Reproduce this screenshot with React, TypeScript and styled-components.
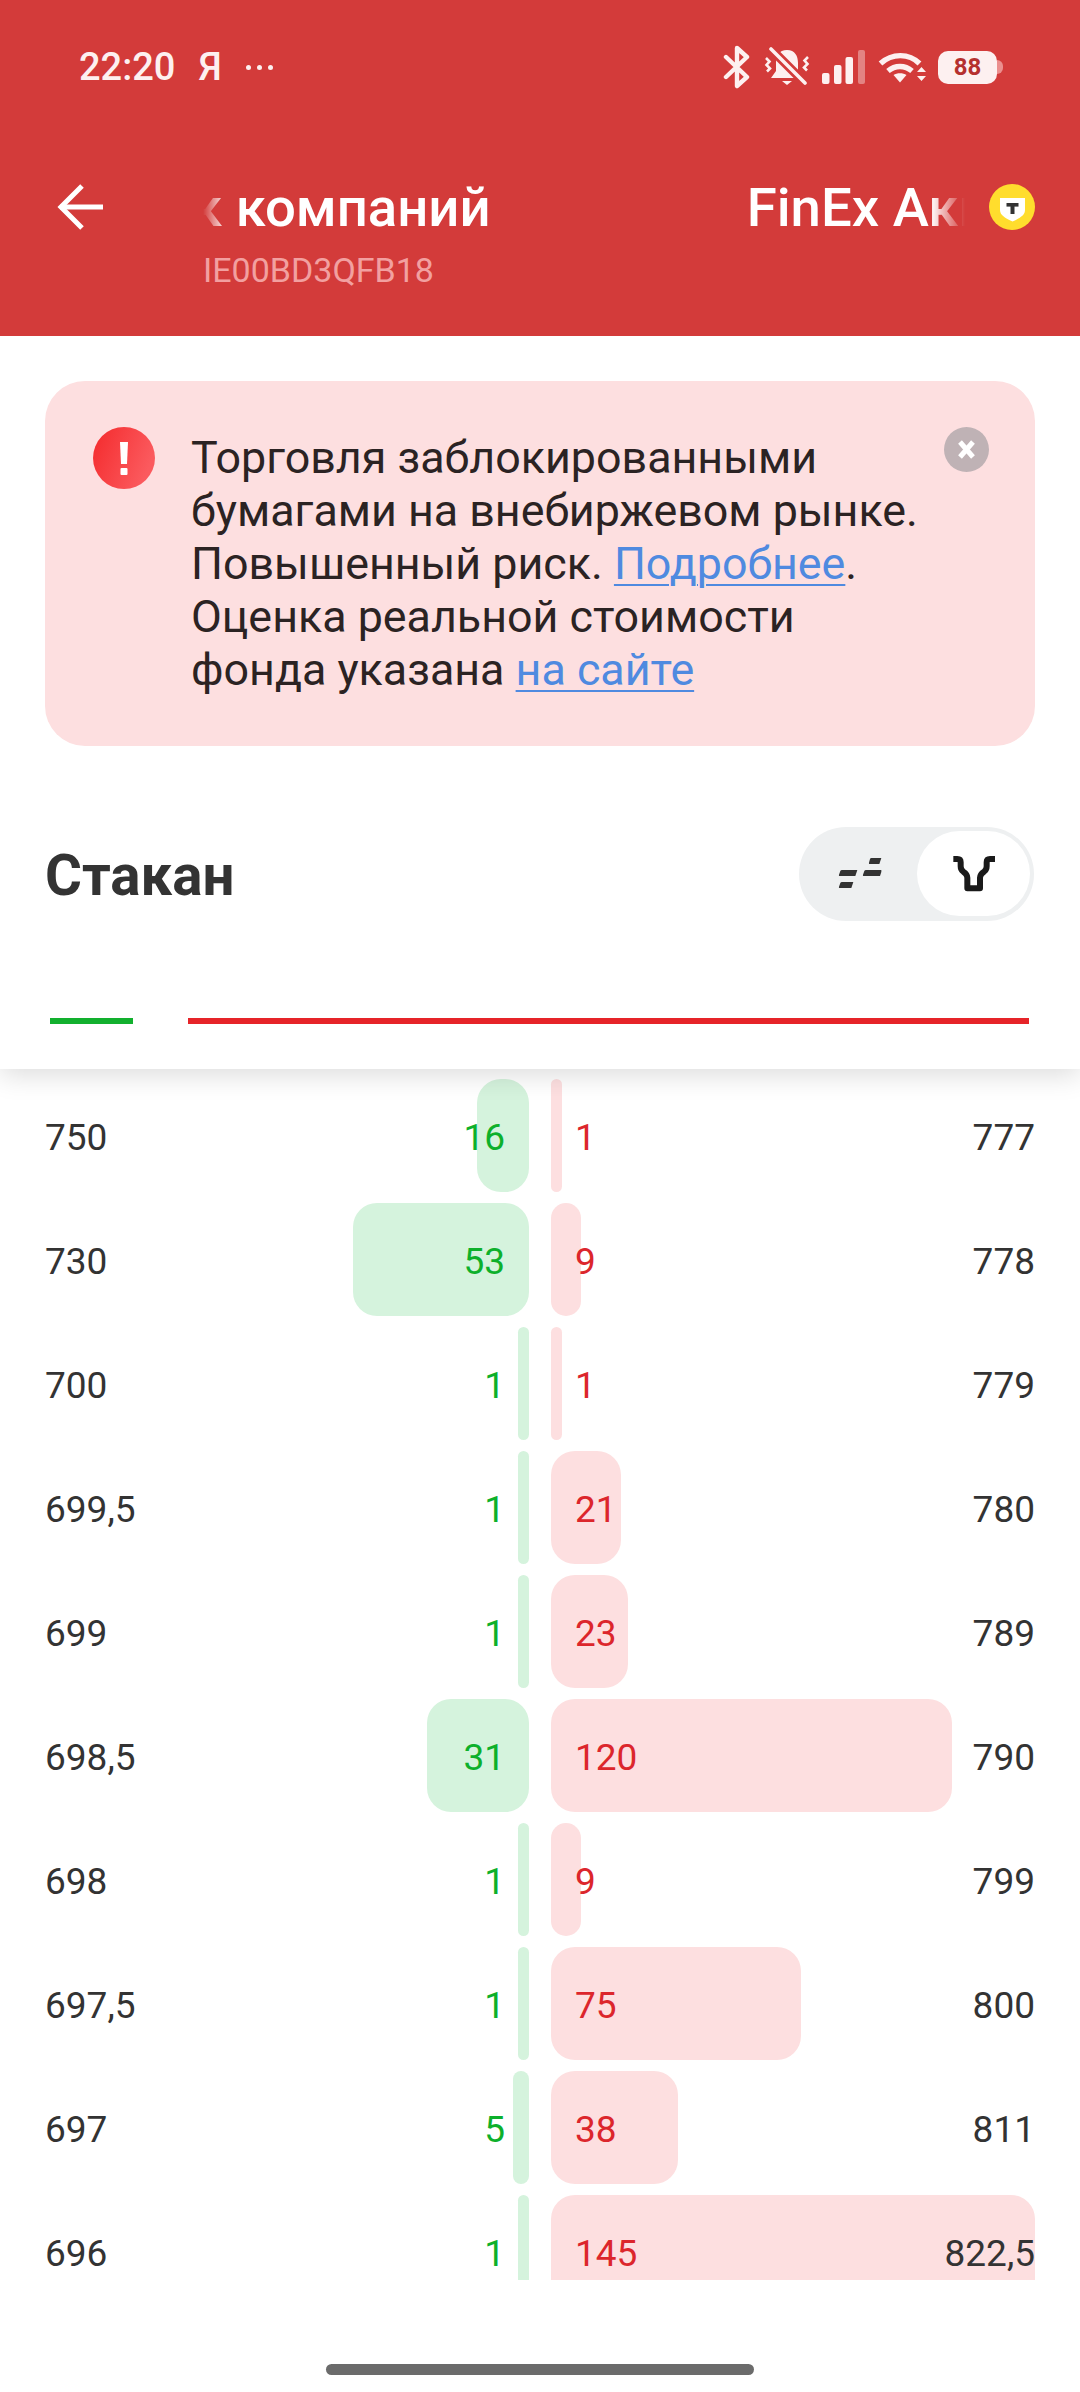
import React from "react";
import styled, { createGlobalStyle } from "styled-components";

const GlobalStyle = createGlobalStyle`
  html, body {
    margin: 0;
    padding: 0;
    background: #fff;
    font-family: Roboto, "Liberation Sans", sans-serif;
  }
`;

type Level = { bid: string; bidQty: number; bidW: number; ask: string; askQty: number; askW: number };

const levels: Level[] = [
  { bid: "750", bidQty: 16, bidW: 52, ask: "777", askQty: 1, askW: 11 },
  { bid: "730", bidQty: 53, bidW: 176, ask: "778", askQty: 9, askW: 30 },
  { bid: "700", bidQty: 1, bidW: 11, ask: "779", askQty: 1, askW: 11 },
  { bid: "699,5", bidQty: 1, bidW: 11, ask: "780", askQty: 21, askW: 70 },
  { bid: "699", bidQty: 1, bidW: 11, ask: "789", askQty: 23, askW: 77 },
  { bid: "698,5", bidQty: 31, bidW: 102, ask: "790", askQty: 120, askW: 401 },
  { bid: "698", bidQty: 1, bidW: 11, ask: "799", askQty: 9, askW: 30 },
  { bid: "697,5", bidQty: 1, bidW: 11, ask: "800", askQty: 75, askW: 250 },
  { bid: "697", bidQty: 5, bidW: 16, ask: "811", askQty: 38, askW: 127 },
  { bid: "696", bidQty: 1, bidW: 11, ask: "822,5", askQty: 145, askW: 484 },
];

const App = (): JSX.Element => {
  return (
    <Screen>
      <GlobalStyle />
      <Header>
        <StatusBar>
          <StatusLeft>
            <Clock>22:20</Clock>
            <StatusLetter>Я</StatusLetter>
            <Dots>
              <i />
              <i />
              <i />
            </Dots>
          </StatusLeft>
          <StatusRight>
            <BluetoothIcon />
            <BellIcon />
            <SignalIcon />
            <WifiIcon />
            <Battery>
              <BatteryBody>88</BatteryBody>
              <BatteryNub />
            </Battery>
          </StatusRight>
        </StatusBar>
        <TitleRow>
          <BackIcon />
          <Marquee>
            <MarqueeFirst>к компаний</MarqueeFirst>
            <MarqueeSecond>FinEx Акции</MarqueeSecond>
          </Marquee>
          <BrandLogo />
        </TitleRow>
        <Isin>IE00BD3QFB18</Isin>
      </Header>

      <TopPanel>
        <Notice>
          <AlertIcon />
          <NoticeText>
            Торговля заблокированными
            <br />
            бумагами на внебиржевом рынке.
            <br />
            Повышенный риск. <NoticeLink>Подробнее</NoticeLink>.
            <br />
            Оценка реальной стоимости
            <br />
            фонда указана <NoticeLink>на сайте</NoticeLink>
          </NoticeText>
          <CloseIcon />
        </Notice>

        <SectionRow>
          <SectionTitle>Стакан</SectionTitle>
          <Toggle>
            <ToggleSlot>
              <DashesIcon />
            </ToggleSlot>
            <ToggleKnob>
              <DepthIcon />
            </ToggleKnob>
          </Toggle>
        </SectionRow>

        <Balance>
          <BalanceBid />
          <BalanceAsk />
        </Balance>
      </TopPanel>

      <Book>
        {levels.map((l) => (
          <BookRow key={l.bid}>
            <BookSide $side="bid">
              <Bar $side="bid" style={{ width: l.bidW }} />
              <Price>{l.bid}</Price>
              <Qty $side="bid">{l.bidQty}</Qty>
            </BookSide>
            <BookSide $side="ask">
              <Bar $side="ask" style={{ width: l.askW }} />
              <Qty $side="ask">{l.askQty}</Qty>
              <Price>{l.ask}</Price>
            </BookSide>
          </BookRow>
        ))}
      </Book>

      <HomeArea>
        <HomeBar />
      </HomeArea>
    </Screen>
  );
};

const BluetoothIcon = () => (
  <svg width="30" height="44" viewBox="0 0 30 44" fill="none" stroke="#fdf0f0" strokeWidth="4.4" strokeLinejoin="round" strokeLinecap="round">
    <path d="M4 12 L25 32 L15 41 V3 L25 12 L4 32" />
  </svg>
);

const BellIcon = () => (
  <svg width="46" height="40" viewBox="0 0 46 40">
    <path d="M23 3 C15 3 12 9 12 16 V24 L7 31 H39 L34 24 V16 C34 9 31 3 23 3Z" fill="#fdf0f0" />
    <path d="M18 34 h10 l-5 4z" fill="#fdf0f0" />
    <path d="M7 2 L41 36" stroke="#d33b3a" strokeWidth="9" />
    <path d="M7 2 L41 36" stroke="#fdf0f0" strokeWidth="3.6" strokeLinecap="round" />
    <path d="M2 11 l3.5 3.5 -3 3.5 3.5 3.5 -3 3" fill="none" stroke="#fdf0f0" strokeWidth="2.6" />
    <path d="M44 10 l-3.5 3.5 3 3.5 -3.5 3.5 3 3" fill="none" stroke="#fdf0f0" strokeWidth="2.6" />
  </svg>
);

const SignalIcon = () => (
  <svg width="44" height="34" viewBox="0 0 44 34" fill="#fdf0f0">
    <rect x="0" y="23" width="7.5" height="11" rx="2" />
    <rect x="12" y="15" width="7.5" height="19" rx="2" />
    <rect x="23.5" y="7" width="7.5" height="27" rx="2" />
    <rect x="36" y="0" width="7" height="34" rx="2" opacity="0.4" />
  </svg>
);

const WifiIcon = () => (
  <svg width="50" height="32" viewBox="0 0 50 32">
    <g fill="none" stroke="#fdf0f0" strokeWidth="5.4">
      <path d="M2.5 12.5 C14 2 31 2 41.5 12.5" />
      <path d="M10 20 C17 14 27 14 34 20" />
    </g>
    <path d="M15.5 24 C19 21.5 25 21.5 28.5 24 L22 31.5z" fill="#fdf0f0" />
    <path d="M39 21 l4.5 -5 4.5 5z M39 25 h9 l-4.5 5z" fill="#fdf0f0" />
  </svg>
);

const BackIcon = () => (
  <svg width="46" height="46" viewBox="0 0 46 46" fill="none" stroke="#fff" strokeWidth="5">
    <path d="M46 23 H3" />
    <path d="M25 2 L4 23 L25 44" />
  </svg>
);

const BrandLogo = () => (
  <svg width="46" height="46" viewBox="0 0 46 46">
    <circle cx="23" cy="23" r="23" fill="#ffdd2d" />
    <path d="M11 14 H36 V26 C36 31 31 34 23.5 37.5 C16 34 11 31 11 26Z" fill="#fff" />
    <rect x="17.5" y="19" width="12" height="3.6" fill="#333" />
    <rect x="21.5" y="19" width="4" height="11" fill="#333" />
  </svg>
);

const AlertIcon = () => (
  <svg width="62" height="62" viewBox="0 0 62 62" style={{ flexShrink: 0 }}>
    <defs>
      <linearGradient id="alertFill" x1="0" y1="0" x2="1" y2="0.4">
        <stop offset="0" stopColor="#f42a2c" />
        <stop offset="1" stopColor="#fb5a5e" />
      </linearGradient>
    </defs>
    <circle cx="31" cy="31" r="31" fill="url(#alertFill)" />
    <path d="M27 15 H35 L34 37 H28Z" fill="#fff" />
    <rect x="27.5" y="41" width="7" height="7" rx="1" fill="#fff" />
  </svg>
);

const CloseIcon = () => (
  <svg width="45" height="45" viewBox="0 0 45 45" style={{ flexShrink: 0 }}>
    <circle cx="22.5" cy="22.5" r="22.5" fill="#bfb2b5" />
    <path d="M16 15 L29 30 M29 15 L16 30" stroke="#fff" strokeWidth="5" />
  </svg>
);

const DashesIcon = () => (
  <svg width="44" height="32" viewBox="0 0 132 96" fill="#333">
    <path d="M12 36 H58 L52 54 H4 Q2 54 3 50 L7 39 Q8 36 12 36Z" />
    <path d="M12 72 H46 L40 90 H4 Q2 90 3 86 L7 75 Q8 72 12 72Z" />
    <path d="M84 36 H130 V42 L126 54 H76 Q74 54 75 50 L79 39 Q80 36 84 36Z" />
    <path d="M100 0 H130 L124 18 H94 Q92 18 93 14 L96 3 Q97 0 100 0Z" />
  </svg>
);

const DepthIcon = () => (
  <svg width="48" height="40" viewBox="570 162 144 118" fill="none" stroke="#1a1a1a" strokeWidth="18" strokeLinejoin="round">
    <path d="M580 176 H592 Q602 176 602 186 V198 Q602 208 610 214 Q622 222 622 232 V264 H660 V232 Q660 222 672 214 Q680 208 680 198 V186 Q680 176 690 176 H705" />
  </svg>
);

const Screen = styled.div`
  width: 1080px;
  height: 2392px;
  background: #fff;
  overflow: hidden;
`;

const Header = styled.header`
  position: relative;
  z-index: 2;
  height: 336px;
  background: #d33b3a;
  color: #fff;
  padding: 0 45px 0 57px;
  box-sizing: border-box;
`;

const StatusBar = styled.div`
  height: 134px;
  display: flex;
  align-items: center;
  justify-content: space-between;
  padding: 0 32px 0 22px;
`;

const StatusLeft = styled.div`
  display: flex;
  align-items: center;
  color: #fdf0f0;
`;

const Clock = styled.span`
  font-size: 38px;
  font-weight: 500;
`;

const StatusLetter = styled.span`
  font-size: 38px;
  font-weight: 500;
  margin-left: 23px;
`;

const Dots = styled.span`
  display: flex;
  gap: 6px;
  margin-left: 24px;

  i {
    width: 5px;
    height: 5px;
    border-radius: 50%;
    background: #fdf0f0;
  }
`;

const StatusRight = styled.div`
  display: flex;
  align-items: center;
  gap: 12px;
`;

const Battery = styled.div`
  display: flex;
  align-items: center;
  margin-left: -2px;
`;

const BatteryBody = styled.div`
  width: 59px;
  height: 33px;
  border-radius: 10px;
  background: #fdf0f0;
  color: #b5302f;
  font-size: 24px;
  font-weight: 700;
  line-height: 33px;
  text-align: center;
`;

const BatteryNub = styled.div`
  width: 6px;
  height: 14px;
  border-radius: 0 6px 6px 0;
  background: #eb8f8e;
`;

const TitleRow = styled.div`
  height: 46px;
  margin-top: 50px;
  display: flex;
  align-items: center;
`;

const Marquee = styled.div`
  width: 762px;
  margin-left: 100px;
  margin-right: 24px;
  display: flex;
  overflow: hidden;
  white-space: nowrap;
  font-size: 54.5px;
  font-weight: 500;
  line-height: 64px;
  -webkit-mask-image: linear-gradient(90deg, transparent 0, #000 24px, #000 728px, transparent 762px);
  mask-image: linear-gradient(90deg, transparent 0, #000 24px, #000 728px, transparent 762px);
`;

const MarqueeFirst = styled.span`
  margin-left: -11px;
  flex-shrink: 0;
`;

const MarqueeSecond = styled.span`
  margin-left: 256px;
  flex-shrink: 0;
`;

const Isin = styled.div`
  margin: 21px 0 0 146px;
  font-size: 34px;
  line-height: 38px;
  color: #f2a0a0;
`;

const TopPanel = styled.div`
  position: relative;
  z-index: 1;
  height: 733px;
  padding: 45px 45px 0;
  box-sizing: border-box;
  background: #fff;
  box-shadow: 0 6px 26px rgba(0, 0, 0, 0.14);
`;

const Notice = styled.div`
  display: flex;
  align-items: flex-start;
  gap: 36px;
  padding: 46px 46px 46px 48px;
  border-radius: 40px;
  background: #fddfe0;
`;

const NoticeText = styled.div`
  flex: 1;
  min-width: 0;
  padding: 4px 0;
  font-size: 44.8px;
  line-height: 53px;
  color: #2b2323;
  white-space: nowrap;
`;

const NoticeLink = styled.a`
  color: #4f8ae0;
  text-decoration: underline;
  text-decoration-thickness: 2px;
  text-underline-offset: 5px;
`;

const SectionRow = styled.div`
  height: 94px;
  margin-top: 81px;
  display: flex;
  align-items: center;
  justify-content: space-between;
`;

const SectionTitle = styled.h2`
  margin: 3px 0 0;
  font-size: 56.5px;
  font-weight: 700;
  color: #333;
`;

const Toggle = styled.div`
  width: 235px;
  height: 94px;
  box-sizing: border-box;
  padding: 4px 4px 5px 0;
  margin-right: 1px;
  display: flex;
  border-radius: 47px;
  background: #eef0f1;
`;

const ToggleSlot = styled.div`
  width: 118px;
  padding-left: 3px;
  box-sizing: border-box;
  display: flex;
  align-items: center;
  justify-content: center;
`;

const ToggleKnob = styled.div`
  width: 113px;
  display: flex;
  align-items: center;
  justify-content: center;
  border-radius: 43px;
  background: #fff;
`;

const Balance = styled.div`
  display: flex;
  gap: 55px;
  margin-top: 97px;
  padding: 0 6px 0 5px;
`;

const BalanceBid = styled.div`
  width: 83px;
  height: 6px;
  background: #12b02e;
`;

const BalanceAsk = styled.div`
  flex: 1;
  height: 6px;
  background: #e62429;
`;

const Book = styled.div`
  height: 1211px;
  box-sizing: border-box;
  padding: 10px 45px 0;
  overflow: hidden;
  display: flex;
  flex-direction: column;
  gap: 11px;
`;

const BookRow = styled.div`
  flex-shrink: 0;
  height: 113px;
  display: grid;
  grid-template-columns: 484px 484px;
  column-gap: 22px;
`;

const BookSide = styled.div<{ $side: "bid" | "ask" }>`
  position: relative;
  display: flex;
  align-items: center;
  justify-content: space-between;
  padding: ${(p) => (p.$side === "bid" ? "3px 24px 0 0" : "3px 0 0 24px")};
`;

const Bar = styled.div<{ $side: "bid" | "ask" }>`
  position: absolute;
  top: 0;
  bottom: 0;
  ${(p) => (p.$side === "bid" ? "right: 0;" : "left: 0;")}
  border-radius: 24px;
  background: ${(p) => (p.$side === "bid" ? "#d5f3dd" : "#fddfe0")};
`;

const Price = styled.span`
  position: relative;
  font-size: 37px;
  color: #333;
`;

const Qty = styled.span<{ $side: "bid" | "ask" }>`
  position: relative;
  font-size: 37px;
  color: ${(p) => (p.$side === "bid" ? "#0db02b" : "#dc262c")};
`;

const HomeArea = styled.div`
  height: 112px;
  padding-top: 84px;
  box-sizing: border-box;
  display: flex;
  justify-content: center;
`;

const HomeBar = styled.div`
  width: 428px;
  height: 11px;
  border-radius: 6px;
  background: #6b6b6b;
`;

export default App;
